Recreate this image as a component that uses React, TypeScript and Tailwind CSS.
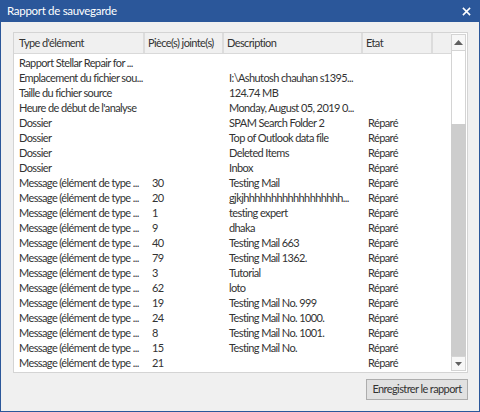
import React from 'react'

type Row = { type: string; att?: string; desc?: string; state?: string }

const rows: Row[] = [
  { type: 'Rapport Stellar Repair for ...' },
  { type: 'Emplacement du fichier sou...', desc: 'I:\\Ashutosh chauhan s1395...' },
  { type: 'Taille du fichier source', desc: '124.74 MB' },
  { type: "Heure de début de l'analyse", desc: 'Monday, August 05, 2019 0...' },
  { type: 'Dossier', desc: 'SPAM Search Folder 2', state: 'Réparé' },
  { type: 'Dossier', desc: 'Top of Outlook data file', state: 'Réparé' },
  { type: 'Dossier', desc: 'Deleted Items', state: 'Réparé' },
  { type: 'Dossier', desc: 'Inbox', state: 'Réparé' },
  { type: 'Message (élément de type ...', att: '30', desc: 'Testing Mail', state: 'Réparé' },
  { type: 'Message (élément de type ...', att: '20', desc: 'gjkjhhhhhhhhhhhhhhhhhh...', state: 'Réparé' },
  { type: 'Message (élément de type ...', att: '1', desc: 'testing expert', state: 'Réparé' },
  { type: 'Message (élément de type ...', att: '9', desc: 'dhaka', state: 'Réparé' },
  { type: 'Message (élément de type ...', att: '40', desc: 'Testing Mail 663', state: 'Réparé' },
  { type: 'Message (élément de type ...', att: '79', desc: 'Testing Mail 1362.', state: 'Réparé' },
  { type: 'Message (élément de type ...', att: '3', desc: 'Tutorial', state: 'Réparé' },
  { type: 'Message (élément de type ...', att: '62', desc: 'loto', state: 'Réparé' },
  { type: 'Message (élément de type ...', att: '19', desc: 'Testing Mail No. 999', state: 'Réparé' },
  { type: 'Message (élément de type ...', att: '24', desc: 'Testing Mail No. 1000.', state: 'Réparé' },
  { type: 'Message (élément de type ...', att: '8', desc: 'Testing Mail No. 1001.', state: 'Réparé' },
  { type: 'Message (élément de type ...', att: '15', desc: 'Testing Mail No.', state: 'Réparé' },
  { type: 'Message (élément de type ...', att: '21', state: 'Réparé' },
]

export default function App() {
  return (
    <div
      className="w-[480px] h-[412px] flex flex-col bg-[#2b579a] overflow-hidden text-[11px] tracking-[-0.6px] text-[#333333]"
      style={{ fontFamily: 'Lato, "Liberation Sans", sans-serif' }}
    >
      {/* barre de titre */}
      <div className="h-[22px] flex items-center justify-between pl-[7px] pr-[9px] text-white shrink-0">
        <span className="text-[11.5px] tracking-[-0.3px]">Rapport de sauvegarde</span>
        <svg width="9" height="9" viewBox="0 0 10 10">
          <path d="M1 1 L9 9 M9 1 L1 9" stroke="white" strokeWidth="1.7" />
        </svg>
      </div>

      <div className="flex-1 mx-px mb-px bg-[#f0f0f0] flex flex-col pl-[12px] pt-[10px]">
        {/* liste */}
        <div className="w-[455px] h-[341px] border border-[#d4d4d4] bg-white flex">
          <div className="flex-1 flex flex-col overflow-hidden">
            <div className="h-[21px] flex border-b border-[#d9d9d9] bg-[#f0f0f0] shrink-0 whitespace-nowrap">
              <div className="w-[131px] pl-[5px] flex items-center border-r-2 border-[#dcdcdc]">Type d'élément</div>
              <div className="w-[79px] pl-[3px] flex items-center border-r-2 border-[#dcdcdc] overflow-hidden">Pièce(s) jointe(s)</div>
              <div className="w-[139px] pl-[3px] flex items-center border-r-2 border-[#dcdcdc]">Description</div>
              <div className="w-[70px] pl-[3px] flex items-center border-r-2 border-[#dcdcdc]">Etat</div>
              <div className="flex-1" />
            </div>
            <div className="flex flex-col pt-px">
              {rows.map((r, i) => (
                <div key={i} className="h-[15px] flex items-center whitespace-nowrap leading-[15px]">
                  <div className="w-[131px] pl-[5px] overflow-hidden">{r.type}</div>
                  <div className="w-[79px] pl-[7px]">{r.att}</div>
                  <div className="w-[139px] pl-[5px] overflow-hidden">{r.desc}</div>
                  <div className="w-[70px] pl-[5px]">{r.state}</div>
                </div>
              ))}
            </div>
          </div>

          {/* barre de défilement */}
          <div className="w-[16px] flex flex-col pt-px pb-px pr-px">
            <div className="h-[17px] border border-[#d4d4d4] bg-[#f7f7f7] flex items-center justify-center">
              <svg width="9" height="5" viewBox="0 0 9 5">
                <path d="M0 5 L4.5 0 L9 5 Z" fill="#606060" />
              </svg>
            </div>
            <div className="h-[73px] border-x border-[#d4d4d4] bg-white" />
            <div className="flex-1 bg-[#cdcdcd]" />
            <div className="h-[15px] border border-[#d4d4d4] bg-[#f7f7f7] flex items-center justify-center">
              <svg width="7" height="4" viewBox="0 0 7 4">
                <path d="M0 0 L3.5 4 L7 0 Z" fill="#606060" />
              </svg>
            </div>
          </div>
        </div>

        <div className="w-[455px] flex justify-end mt-[6px]">
          <button className="h-[21px] w-[102px] bg-[#e1e1e1] border border-[#adadad] text-[11px] tracking-[-0.6px] text-[#333333]">
            Enregistrer le rapport
          </button>
        </div>
      </div>
    </div>
  )
}
